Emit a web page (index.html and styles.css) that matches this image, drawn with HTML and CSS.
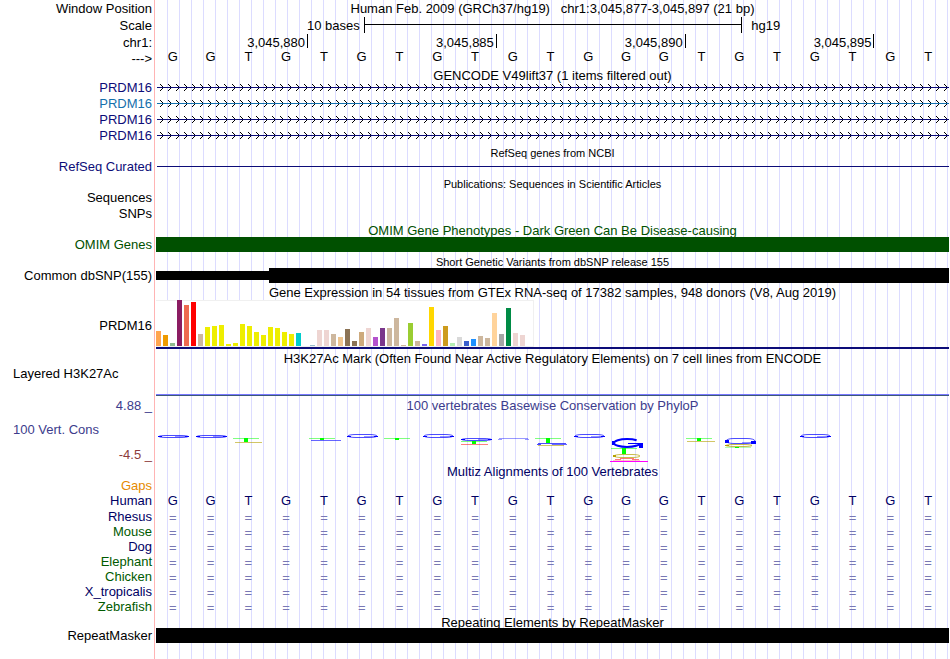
FILE: index.html
```html
<!DOCTYPE html>
<html lang="en">
<head>
<meta charset="utf-8">
<title>Human chr1:3,045,877-3,045,897</title>
<link rel="stylesheet" href="styles.css">
</head>
<body>
<svg width="0" height="0" class="defs" aria-hidden="true">
  <defs>
    <pattern id="arrows" width="8" height="16" patternUnits="userSpaceOnUse">
      <path d="M3 5.5h1M4 6.5h1M5 7.5h1M5 9.5h1M4 10.5h1M3 11.5h1" stroke="currentColor"/>
    </pattern>
  </defs>
</svg>
<main class="browser">
  <div class="row h16"><span class="label">Window Position</span><h1 class="title">Human Feb. 2009 (GRCh37/hg19)   chr1:3,045,877-3,045,897 (21 bp)</h1></div>
  <div class="row h18"><span class="label">Scale</span>
    <div class="scale"><span class="scale-text">10 bases</span><span class="ruler"></span><span class="assembly">hg19</span></div></div>
  <div class="row h16"><span class="label">chr1:</span>
    <div class="positions"><span>3,045,880</span><span>3,045,885</span><span>3,045,890</span><span>3,045,895</span></div></div>
  <div class="row h16"><span class="label">---&gt;</span><div class="bases up" data-bases="GGTGTGTGTGTGGGTGTGTGT"></div></div>

  <div class="row h13"><h2 class="title lower">GENCODE V49lift37 (1 items filtered out)</h2></div>
  <div class="row h16 navy"><span class="label">PRDM16</span><svg class="gene"><rect y="8" width="100%" height="1" fill="currentColor"/><rect width="100%" height="16" fill="url(#arrows)"/></svg></div>
  <div class="row h16 blue"><span class="label">PRDM16</span><svg class="gene"><rect y="8" width="100%" height="1" fill="currentColor"/><rect width="100%" height="16" fill="url(#arrows)"/></svg></div>
  <div class="row h16 navy"><span class="label">PRDM16</span><svg class="gene"><rect y="8" width="100%" height="1" fill="currentColor"/><rect width="100%" height="16" fill="url(#arrows)"/></svg></div>
  <div class="row h16 navy"><span class="label">PRDM16</span><svg class="gene"><rect y="8" width="100%" height="1" fill="currentColor"/><rect width="100%" height="16" fill="url(#arrows)"/></svg></div>

  <div class="row h15"><h2 class="title small">RefSeq genes from NCBI</h2></div>
  <div class="row h16 navy"><span class="label">RefSeq Curated</span><div class="thin-line"></div></div>
  <div class="row h15"><h2 class="title small">Publications: Sequences in Scientific Articles</h2></div>
  <div class="row h16"><span class="label">Sequences</span></div>
  <div class="row h16"><span class="label">SNPs</span></div>

  <div class="row h16 green"><h2 class="title lower">OMIM Gene Phenotypes - Dark Green Can Be Disease-causing</h2></div>
  <div class="row h15 green"><span class="label">OMIM Genes</span><div class="block"></div></div>

  <div class="row h16"><h2 class="title small">Short Genetic Variants from dbSNP release 155</h2></div>
  <div class="row h15 black"><span class="label">Common dbSNP(155)</span><div class="variant"><span class="flank"></span><span class="block"></span></div></div>

  <div class="row h17"><h2 class="title lower">Gene Expression in 54 tissues from GTEx RNA-seq of 17382 samples, 948 donors (V8, Aug 2019)</h2></div>
  <div class="row h49"><span class="label lower">PRDM16</span><div class="expression"><div class="bars" id="bars"></div></div></div>

  <div class="row h17"><h2 class="title lower">H3K27Ac Mark (Often Found Near Active Regulatory Elements) on 7 cell lines from ENCODE</h2></div>
  <div class="row h14"><span class="label start">Layered H3K27Ac</span></div>
  <div class="row h16"><div class="signal"></div></div>

  <div class="row h19 violet"><span class="label">4.88 _</span><h2 class="title">100 vertebrates Basewise Conservation by PhyloP</h2></div>
  <div class="row h47">
    <div class="axis"><span class="label start violet">100 Vert. Cons</span><span class="label maroon">-4.5 _</span></div>
    <svg class="logo" viewBox="156 415 793 47" preserveAspectRatio="none" id="logo" role="img" aria-label="Conservation logo"></svg>
  </div>

  <div class="row h16 deep"><h2 class="title lower">Multiz Alignments of 100 Vertebrates</h2></div>
  <div class="row h15 orange"><span class="label">Gaps</span></div>
  <div class="row h15 deep"><span class="label">Human</span><div class="bases" data-bases="GGTGTGTGTGTGGGTGTGTGT"></div></div>
  <div class="row h15 deep"><span class="label">Rhesus</span><div class="bases gap" data-bases="====================="></div></div>
  <div class="row h15 leaf"><span class="label">Mouse</span><div class="bases gap" data-bases="====================="></div></div>
  <div class="row h15 deep"><span class="label">Dog</span><div class="bases gap" data-bases="====================="></div></div>
  <div class="row h15 leaf"><span class="label">Elephant</span><div class="bases gap" data-bases="====================="></div></div>
  <div class="row h15 leaf"><span class="label">Chicken</span><div class="bases gap" data-bases="====================="></div></div>
  <div class="row h15 deep"><span class="label">X_tropicalis</span><div class="bases gap" data-bases="====================="></div></div>
  <div class="row h15 leaf"><span class="label">Zebrafish</span><div class="bases gap" data-bases="====================="></div></div>

  <div class="row h15"><h2 class="title lower">Repeating Elements by RepeatMasker</h2></div>
  <div class="row h15 black"><span class="label">RepeatMasker</span><div class="block"></div></div>
</main>
<script src="script.js"></script>
</body>
</html>
```
FILE: styles.css
```css
* { box-sizing: border-box; }

body {
  margin: 0 1px 0 0;
  background: #fff;
  color: #000;
  font: 13px/15px "Liberation Sans", Arial, sans-serif;
}

.defs { position: absolute; }

/* A pink edge beside the labels, then a guide line every 12px. */
.browser {
  min-height: 100vh;
  padding-bottom: 16px;
  background:
    linear-gradient(#ffb4b4, #ffb4b4) 154px 0 / 1px 100% no-repeat,
    linear-gradient(90deg, #fff 156px, transparent 156px),
    repeating-linear-gradient(90deg, #dcdcff 0 1px, transparent 1px 12px) 11px 0;
}

.row {
  display: grid;
  grid-template-columns: 154px minmax(0, 1fr);
  column-gap: 2px;
  align-items: center;
}

.h13 { height: 13px; }
.h14 { height: 14px; }
.h15 { height: 15px; }
.h16 { height: 16px; }
.h17 { height: 17px; }
.h18 { height: 18px; }
.h19 { height: 19px; }
.h47 { height: 47px; }
.h49 { height: 49px; }

.navy { color: #0c0c78; }
.blue { color: #1470ac; }
.green { color: #005000; }
.violet { color: #3c3c8c; }
.maroon { color: #8c3c3c; }
.deep { color: #000064; }
.leaf { color: #005a00; }
.orange { color: #e68a00; }

.label {
  padding-right: 2px;
  text-align: right;
  white-space: nowrap;
}

.label.start { padding-left: 13px; text-align: left; }

.title {
  grid-column: 2;
  margin: 0;
  font-size: 13px;
  font-weight: normal;
  text-align: center;
  white-space: pre;
}

.title.small { padding-top: 3px; font-size: 11px; }
.lower { padding-top: 2px; }

.scale {
  display: grid;
  grid-template-columns: 11fr 20fr 11fr;
  align-items: center;
}

.scale-text { padding-right: 4px; text-align: right; }
.assembly { padding-left: 10px; }

.ruler {
  height: 16px;
  margin-right: -1px;
  border: solid #000;
  border-width: 0 1px;
  background: linear-gradient(#000, #000) 0 7px / 100% 1px no-repeat;
}

.positions {
  display: grid;
  grid-template-columns: 4fr 5fr 5fr 5fr 2fr;
  align-self: start;
  line-height: 17px;
}

.positions span {
  height: 14px;
  margin-right: -1px;
  padding-right: 2px;
  border-right: 1px solid #000;
  text-align: right;
}

.bases {
  display: grid;
  grid-template-columns: repeat(21, minmax(0, 1fr));
  text-align: center;
}

.bases span { padding-right: 4px; }
.bases.up { align-self: start; line-height: 14px; }
.bases.gap { padding-top: 2px; color: #7878b4; }

.gene {
  display: block;
  width: calc(100% - 1px);
  height: 16px;
  margin-left: 1px;
}

.thin-line { height: 1px; margin-left: 1px; background: currentColor; }

.block { height: 15px; background: currentColor; }

.variant {
  display: grid;
  grid-template-columns: 3fr 18fr;
  align-items: center;
}

.flank { height: 9px; background: currentColor; }

.expression {
  height: 49px;
  border-bottom: 2px solid #0c0c78;
}

.bars {
  display: flex;
  align-items: flex-end;
  gap: 2px;
  width: 378px;
  height: 47px;
  border: solid #f0f0f0;
  border-width: 1px 1px 1px 0;
  background: #fff;
}

.bars span { width: 5px; }

.signal {
  grid-column: 2;
  align-self: end;
  height: 2px;
  border-top: 1px solid #7878ff;
  background: #3c5a78;
}

.axis {
  display: flex;
  flex-direction: column;
  justify-content: flex-end;
  gap: 10px;
  height: 47px;
}

.logo {
  display: block;
  width: 100%;
  height: 47px;
}
```
FILE: script.js
```js
document.querySelectorAll("[data-bases]").forEach(function (row) {
  row.dataset.bases.split("").forEach(function (base) {
    var cell = document.createElement("span");
    cell.textContent = base;
    row.append(cell);
  });
});

// Median expression per tissue: [colour, bar height, ...heights of the same colour]
var tissues = [
  ["#ffa54f", 15], ["#ee9a00", 11], ["#8fbc8f", 3], ["#8b1c62", 46], ["#ee6a50", 41],
  ["#ff0000", 44], ["#cdb79e", 12],
  ["#eeee00", 19, 20, 21, 2, 3, 22, 20, 14, 11, 19, 18, 14, 12],
  ["#00cdcd", 13], ["#ee82ee", 0], ["#9ac0cd", 1], ["#eed5d2", 16, 16], ["#cdb79e", 12],
  ["#eec591", 9], ["#8b7355", 17, 5], ["#cdaa7d", 14], ["#eed5d2", 18], ["#b452cd", 9],
  ["#7a378b", 18], ["#cdb79e", 18, 28, 1], ["#9acd32", 23], ["#cdb79e", 5],
  ["#7a67ee", 2], ["#ffd700", 39], ["#ffb6c1", 16], ["#cd9b1d", 20], ["#b4eeb4", 3],
  ["#d9d9d9", 9], ["#3a5fcd", 5], ["#1e90ff", 7], ["#cdb79e", 10, 8], ["#ffd39b", 33],
  ["#a6a6a6", 12], ["#008b45", 38], ["#eed5d2", 13, 11], ["#ff00ff", 0]
];
var bars = document.getElementById("bars");
tissues.forEach(function (group) {
  group.slice(1).forEach(function (height) {
    var bar = document.createElement("span");
    bar.style.height = height + "px";
    bar.style.background = group[0];
    bars.append(bar);
  });
});

// Conservation marks, as flattened rings, stems and strokes.
var logo = document.getElementById("logo");
function add(tag, attrs) {
  var node = document.createElementNS("http://www.w3.org/2000/svg", tag);
  Object.keys(attrs).forEach(function (key) { node.setAttribute(key, attrs[key]); });
  logo.append(node);
}
function box(x, y, width, height, fill, opacity) {
  add("rect", { x: x, y: y, width: width, height: height, fill: fill, opacity: opacity || 1 });
}
function ring(x, y, width, height, color) {
  add("rect", {
    x: x + 1, y: y + 0.5, width: width - 2, height: height - 1, rx: 8, ry: (height - 1) / 2,
    fill: "none", stroke: color, "stroke-width": 1, opacity: 0.7
  });
}
function mark(x, y, height) {
  ring(x, y, 31, height, "#0000ff");
  box(x, y + height - 2, 4, 1, "#0000ff");
  box(x + 17, y + height - 2, 10, 1, "#0000ff", 0.4);
  box(x + 27, y + height - 2, 4, 1, "#0000ff");
}
function stem(x, y, height) {
  box(x, y, 26, 1, "#00ff00", 0.5);
  box(x + 11, y, 4, height, "#00ff00");
}
mark(158, 435, 3);
mark(196, 435, 3);
stem(233, 438, 4); box(235, 442, 27, 1, "#b4a000", 0.6);
stem(309, 438, 2); box(311, 440, 30, 1, "#0000ff", 0.6);
mark(347, 434, 4);
stem(384, 438, 2);
mark(423, 434, 4);
mark(461, 438, 3); stem(461, 441, 3); box(461, 444, 27, 1, "#ff0000", 0.5);
box(499, 438, 29, 1, "#0000ff", 0.4); box(498, 439, 4, 1, "#0000ff", 0.4); box(525, 439, 4, 1, "#0000ff", 0.4);
stem(535, 438, 5); box(538, 443, 28, 1, "#0000ff", 0.7); box(537, 444, 4, 1, "#0000ff", 0.7);
box(552, 444, 15, 1, "#0000ff", 0.6); box(538, 445, 26, 1, "#b4a000", 0.6);
mark(574, 434, 4);
add("ellipse", {
  cx: 627, cy: 443, rx: 13, ry: 4, fill: "none", stroke: "#0000ff",
  "stroke-width": 2, pathLength: 100, "stroke-dasharray": "92 8"
});
box(612, 441, 3, 4, "#0000ff"); box(628, 443, 15, 1, "#0000ff"); box(639, 443, 4, 5, "#0000ff");
stem(611, 448, 6); ring(613, 454, 28, 4, "#b4a000"); box(613, 455, 3, 2, "#b4a000");
box(620, 458, 14, 1, "#ff4040", 0.7); box(615, 459, 6, 1, "#ff4040", 0.7); box(632, 459, 7, 1, "#ff4040", 0.7);
box(613, 460, 27, 1, "#ff4040", 0.3); box(610, 461, 38, 1, "#ff00ff");
stem(686, 438, 3); box(687, 441, 28, 1, "#b4a000", 0.6);
mark(725, 438, 6); box(725, 440, 4, 3, "#0000ff"); box(751, 441, 5, 3, "#0000ff");
ring(725, 444, 28, 3, "#b4a000"); box(725, 445, 4, 1, "#b4a000");
box(725, 447, 26, 1, "#00ff00", 0.3); box(735, 447, 4, 1, "#00ff00");
mark(800, 434, 4);
```
